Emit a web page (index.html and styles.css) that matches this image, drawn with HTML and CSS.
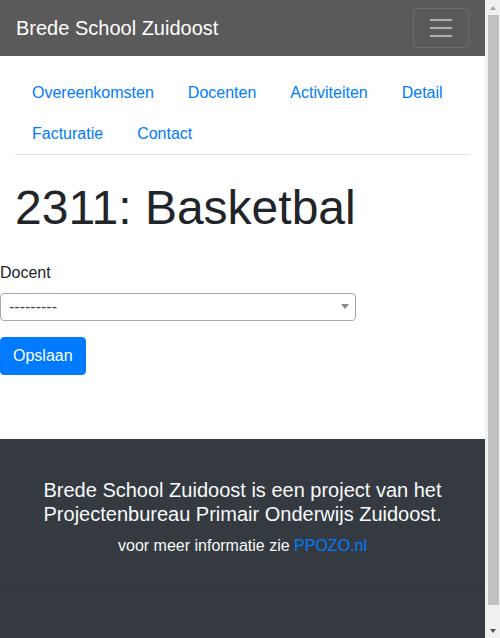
FILE: index.html
```html
<!DOCTYPE html>
<html lang="nl">
<head>
<meta charset="utf-8">
<title>2311: Basketbal</title>
<link rel="stylesheet" href="styles.css">
</head>
<body>
<div class="page">
  <nav class="navbar">
    <a class="brand" href="#">Brede School Zuidoost</a>
    <button class="toggler" type="button" aria-label="Menu">
      <svg class="toggler-icon" width="30" height="30" viewBox="0 0 30 30"><path d="M4 7h22M4 15h22M4 23h22" stroke="rgba(255,255,255,0.5)" stroke-width="2" fill="none"/></svg>
    </button>
  </nav>
  <div class="container">
    <ul class="tabs">
      <li><a class="tab-link" href="#">Overeenkomsten</a></li>
      <li><a class="tab-link" href="#">Docenten</a></li>
      <li><a class="tab-link" href="#">Activiteiten</a></li>
      <li><a class="tab-link" href="#">Detail</a></li>
      <li><a class="tab-link" href="#">Facturatie</a></li>
      <li><a class="tab-link" href="#">Contact</a></li>
    </ul>
    <h1 class="title">2311: Basketbal</h1>
  </div>
  <form class="form">
    <div class="form-group">
      <label class="label">Docent</label>
      <div class="select">
        <span class="select-text">---------</span>
        <span class="select-arrow"></span>
      </div>
    </div>
    <button class="btn" type="button">Opslaan</button>
  </form>
  <footer class="footer">
    <div class="footer-top">
      <h5 class="footer-title">Brede School Zuidoost is een project van het Projectenbureau Primair Onderwijs Zuidoost.</h5>
      <p class="footer-text">voor meer informatie zie <a class="footer-link" href="#">PPOZO.nl</a></p>
    </div>
    <div class="footer-bottom"></div>
  </footer>
</div>
<div class="scrollbar" aria-hidden="true">
  <span class="scroll-up"></span>
  <span class="scroll-thumb"></span>
  <span class="scroll-down"></span>
</div>
</body>
</html>
```
FILE: styles.css
```css
html, body {
  margin: 0;
  padding: 0;
}
body {
  font-family: "Liberation Sans", Arial, sans-serif;
  font-size: 16px;
  line-height: 1.5;
  color: #212529;
  background: #fff;
}
.page {
  width: 485px;
}
.navbar {
  background: #5a5a5a;
  height: 56px;
  box-sizing: border-box;
  padding: 8px 16px;
  display: flex;
  align-items: center;
  justify-content: space-between;
}
.brand {
  color: #fff;
  font-size: 20px;
  line-height: 30px;
  text-decoration: none;
}
.toggler {
  width: 56px;
  height: 40px;
  box-sizing: border-box;
  padding: 4px 12px;
  background: transparent;
  border: 1px solid rgba(255,255,255,0.1);
  border-radius: 4px;
  display: flex;
  align-items: center;
  justify-content: center;
}
.toggler-icon {
  display: block;
}
.container {
  padding: 0 15px;
}
.tabs {
  list-style: none;
  margin: 16px 0 0;
  padding: 0;
  display: flex;
  flex-wrap: wrap;
  border-bottom: 1px solid #dee2e6;
}
.tab-link {
  display: block;
  padding: 8px 16px;
  border: 1px solid transparent;
  margin-bottom: -1px;
  color: #007bff;
  text-decoration: none;
}
.title {
  font-size: 48px;
  font-weight: 400;
  line-height: 1.2;
  margin: 24px 0 24px;
}
.form {
  margin: 0 0 64px;
}
.form-group {
  margin-bottom: 16px;
}
.label {
  display: block;
  margin-bottom: 8px;
}
.select {
  width: 356px;
  height: 28px;
  box-sizing: border-box;
  border: 1px solid #aaa;
  border-radius: 4px;
  background: #fff;
  display: flex;
  align-items: center;
  justify-content: space-between;
  padding: 0 6px 0 8px;
}
.select-text {
  color: #444;
  line-height: 26px;
}
.select-arrow {
  width: 0;
  height: 0;
  border-style: solid;
  border-width: 5px 4px 0 4px;
  border-color: #888 transparent transparent transparent;
}
.btn {
  font-family: inherit;
  font-size: 16px;
  line-height: 24px;
  padding: 6px 12px;
  color: #fff;
  background: #007bff;
  border: 1px solid #007bff;
  border-radius: 4px;
  display: block;
}
.footer {
  background: #343a40;
  color: #f8f9fa;
  text-align: center;
}
.footer-top {
  padding: 39px 15px 17px;
}
.footer-title {
  font-size: 20px;
  font-weight: 400;
  line-height: 1.2;
  margin: 0 0 8px;
}
.footer-text {
  margin: 0 0 16px;
}
.footer-link {
  color: #007bff;
  text-decoration: none;
}
.footer-bottom {
  border-top: 1px solid rgba(0,0,0,0.1);
  height: 66px;
}
.scrollbar {
  position: fixed;
  top: 0;
  right: 0;
  width: 15px;
  height: 100vh;
  background: #f1f1f1;
  display: flex;
  flex-direction: column;
  align-items: center;
}
.scroll-up,
.scroll-down {
  flex: 0 0 15px;
  width: 15px;
  display: flex;
  align-items: center;
  justify-content: center;
}
.scroll-up::before {
  content: "";
  border-style: solid;
  border-width: 0 3.5px 4px 3.5px;
  border-color: transparent transparent #a3a3a3 transparent;
}
.scroll-down::before {
  content: "";
  border-style: solid;
  border-width: 4px 3.5px 0 3.5px;
  border-color: #505050 transparent transparent transparent;
}
.scroll-thumb {
  flex: 1 1 auto;
  width: 11px;
  margin-left: 1px;
  margin-bottom: 18px;
  background: #c1c1c1;
}
```
